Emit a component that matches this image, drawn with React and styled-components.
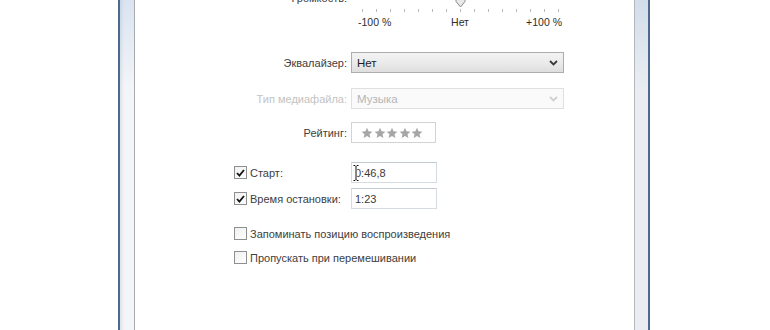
import React from "react";
import styled, { createGlobalStyle } from "styled-components";

const Global = createGlobalStyle`
  html, body { margin: 0; padding: 0; background: #ffffff; overflow: hidden; }
  body { font-family: "Liberation Sans", Arial, sans-serif; }
`;

const Page = styled.div`
  width: 770px;
  height: 330px;
  overflow: hidden;
  display: flex;
  align-items: flex-start;
  padding-left: 118px;
  box-sizing: border-box;
  background: #ffffff;
`;

const Window = styled.div`
  width: 532px;
  height: 400px;
  margin-top: -20px;
  display: flex;
  box-sizing: border-box;
  border-left: 2px solid #4d6a8c;
  border-right: 2px solid #4d6a8c;
  background:
    linear-gradient(180deg, rgba(120,160,210,0.25) 0px, rgba(120,160,210,0.0) 110px),
    linear-gradient(90deg, #dde3ea 0px, #f3f5f8 4px, #f6f8fa 50%, #e9edf1 100%);
  padding: 0 13px 0 14px;
`;

const Content = styled.div`
  flex: 1;
  background: #ffffff;
  border-left: 1px solid #a7abb0;
  border-right: 1px solid #b4b8bc;
  display: flex;
  flex-direction: column;
  color: #3f3f3f;
  font-size: 11px;
`;

const Row = styled.div`
  display: grid;
  grid-template-columns: 212px auto;
  column-gap: 4px;
  align-items: center;
  height: 21px;
  margin-top: ${(p) => p.$mt || 0}px;
`;

const VolumeRow = styled.div`
  display: grid;
  grid-template-columns: 212px auto;
  column-gap: 4px;
  align-items: start;
`;

const Label = styled.div`
  text-align: right;
  line-height: 16px;
  white-space: nowrap;
  color: ${(p) => (p.$disabled ? "#c3c3c3" : "#404040")};
  margin-top: ${(p) => p.$mt || 0}px;
`;

const SliderCell = styled.div`
  width: 213px;
  display: flex;
  flex-direction: column;
`;

const TrackArea = styled.div`
  position: relative;
  height: 28px;
`;

const TrackLine = styled.div`
  position: absolute;
  left: 11px;
  right: 6px;
  top: 10px;
  height: 3px;
  border: 1px solid #b0b0b0;
  background: #e7e7e7;
`;

const Thumb = styled.svg`
  position: absolute;
  left: 104px;
  bottom: 0;
`;

const Ticks = styled.div`
  display: flex;
  gap: 13px;
  height: 3px;
  margin-top: 1px;
  padding-left: 11px;
`;

const Tick = styled.span`
  width: 1px;
  height: 3px;
  background: #b9b9b9;
`;

const ScaleLabels = styled.div`
  display: grid;
  grid-template-columns: 1fr auto 1fr;
  margin-top: 4px;
  padding: 0 2px 0 7px;
  font-size: 10.5px;
  line-height: 13px;
  color: #2e2e2e;
  span:first-child { justify-self: start; }
  span:last-child { justify-self: end; }
`;

const Select = styled.div`
  width: 213px;
  height: 21px;
  box-sizing: border-box;
  display: flex;
  align-items: center;
  justify-content: space-between;
  padding: 0 5px 0 5px;
  border: 1px solid ${(p) => (p.$disabled ? "#e0e0e0" : "#adadad")};
  background: ${(p) =>
    p.$disabled
      ? "#fafafa"
      : "linear-gradient(180deg, #f3f3f3 0%, #ebebeb 50%, #dedede 100%)"};
  color: ${(p) => (p.$disabled ? "#b5b5b5" : "#1c1c1c")};
  font-size: 11.5px;
`;

const Chevron = ({ color }) => (
  <svg width="9" height="6" viewBox="0 0 9 6">
    <polyline points="1,1 4.5,4.5 8,1" fill="none" stroke={color} strokeWidth="1.8" />
  </svg>
);

const RatingBox = styled.div`
  width: 85px;
  height: 21px;
  box-sizing: border-box;
  border: 1px solid #d3d3d3;
  display: flex;
  align-items: center;
  padding-left: 9px;
  gap: 0.5px;
`;

const Star = () => (
  <svg width="12" height="12" viewBox="0 0 24 24">
    <path
      d="M12 1.5l3.1 7.1 7.7.7-5.8 5.1 1.8 7.6L12 18l-6.8 4 1.8-7.6L1.2 9.3l7.7-.7z"
      fill="#a6a6a6"
    />
  </svg>
);

const CheckLabel = styled.div`
  display: flex;
  align-items: center;
  gap: 3px;
  padding-left: 99px;
  white-space: nowrap;
  color: #404040;
  line-height: 16px;
`;

const Box = styled.span`
  width: 13px;
  height: 13px;
  box-sizing: border-box;
  border: 1px solid #8e8f8f;
  background: linear-gradient(135deg, #f0f0f0 0%, #ffffff 100%);
  display: inline-flex;
  align-items: center;
  justify-content: center;
  flex: none;
`;

const CheckBox = ({ checked }) => (
  <Box>
    {checked && (
      <svg width="9" height="8" viewBox="0 0 9 8">
        <polyline points="1,4 3.4,6.6 8,1" fill="none" stroke="#151515" strokeWidth="1.8" />
      </svg>
    )}
  </Box>
);

const TextInput = styled.div`
  position: relative;
  width: 86px;
  height: 21px;
  box-sizing: border-box;
  border: 1px solid #d5dbe1;
  border-top-color: #c2c9d0;
  display: flex;
  align-items: center;
  padding-left: 3px;
  color: #3a3a3a;
`;

const Cursor = styled.svg`
  position: absolute;
  left: 1px;
  top: 2px;
`;

const FullRow = styled.div`
  display: flex;
  align-items: center;
  height: 21px;
  margin-top: ${(p) => p.$mt || 0}px;
`;

const beam =
  "M0.5 0.5 H2 L3 1.5 L4 0.5 H5.5 M3 1.5 V14.5 M0.5 15.5 H2 L3 14.5 L4 15.5 H5.5";

export default function App() {
  const ticks = Array.from({ length: 15 });
  return (
    <>
      <Global />
      <Page>
        <Window>
          <Content>
            <VolumeRow>
              <Label $mt={10}>Громкость:</Label>
              <SliderCell>
                <TrackArea>
                  <TrackLine />
                  <Thumb width="11" height="18" viewBox="0 0 11 18">
                    <path
                      d="M1 1.5 Q1 0.5 2 0.5 H9 Q10 0.5 10 1.5 V11.5 L5.5 17 L1 11.5 Z"
                      fill="#e9e9e9"
                      stroke="#8a8a8a"
                      strokeWidth="1"
                    />
                  </Thumb>
                </TrackArea>
                <Ticks>
                  {ticks.map((_, i) => (
                    <Tick key={i} />
                  ))}
                </Ticks>
                <ScaleLabels>
                  <span>-100 %</span>
                  <span>Нет</span>
                  <span>+100 %</span>
                </ScaleLabels>
              </SliderCell>
            </VolumeRow>

            <Row $mt={23}>
              <Label>Эквалайзер:</Label>
              <Select>
                <span>Нет</span>
                <Chevron color="#3a3a3a" />
              </Select>
            </Row>

            <Row $mt={15}>
              <Label $disabled>Тип медиафайла:</Label>
              <Select $disabled>
                <span>Музыка</span>
                <Chevron color="#cfcfcf" />
              </Select>
            </Row>

            <Row $mt={13}>
              <Label>Рейтинг:</Label>
              <RatingBox>
                <Star />
                <Star />
                <Star />
                <Star />
                <Star />
              </RatingBox>
            </Row>

            <Row $mt={19}>
              <CheckLabel>
                <CheckBox checked />
                <span>Старт:</span>
              </CheckLabel>
              <TextInput>
                <span>0:46,8</span>
                <Cursor width="6" height="16" viewBox="0 0 6 16">
                  <path d={beam} fill="none" stroke="#ffffff" strokeWidth="2.4" />
                  <path d={beam} fill="none" stroke="#111111" strokeWidth="1" />
                </Cursor>
              </TextInput>
            </Row>

            <Row $mt={5}>
              <CheckLabel>
                <CheckBox checked />
                <span>Время остановки:</span>
              </CheckLabel>
              <TextInput>
                <span>1:23</span>
              </TextInput>
            </Row>

            <FullRow $mt={14}>
              <CheckLabel>
                <CheckBox />
                <span>Запоминать позицию воспроизведения</span>
              </CheckLabel>
            </FullRow>

            <FullRow $mt={3}>
              <CheckLabel>
                <CheckBox />
                <span>Пропускать при перемешивании</span>
              </CheckLabel>
            </FullRow>
          </Content>
        </Window>
      </Page>
    </>
  );
}
